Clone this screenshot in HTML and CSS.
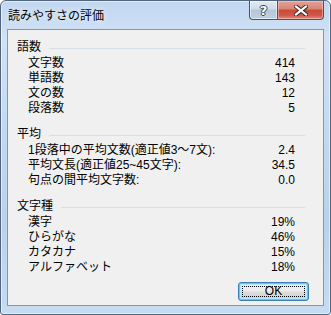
FILE: index.html
```html
<!DOCTYPE html>
<html lang="ja">
<head>
<meta charset="utf-8">
<title>読みやすさの評価</title>
<link rel="stylesheet" href="styles.css">
</head>
<body>
<div class="window">
  <div class="titlebar">
    <span class="title">読みやすさの評価</span>
    <div class="caption-buttons">
      <div class="cap-btn help"><span>?</span></div>
      <div class="cap-btn close">
        <svg width="14" height="11" viewBox="0 0 14 11">
          <path d="M2 1.5 L12 9.5 M12 1.5 L2 9.5" stroke="#3a2a2a" stroke-width="4.2" stroke-linecap="square" fill="none"/>
          <path d="M2 1.5 L12 9.5 M12 1.5 L2 9.5" stroke="#ffffff" stroke-width="2.2" stroke-linecap="square" fill="none"/>
        </svg>
      </div>
    </div>
  </div>
  <div class="client">
    <section class="group">
      <div class="group-head"><span>語数</span><span class="rule"></span></div>
      <div class="rows">
        <div class="row"><span>文字数</span><span class="val">414</span></div>
        <div class="row"><span>単語数</span><span class="val">143</span></div>
        <div class="row"><span>文の数</span><span class="val">12</span></div>
        <div class="row"><span>段落数</span><span class="val">5</span></div>
      </div>
    </section>
    <section class="group">
      <div class="group-head"><span>平均</span><span class="rule"></span></div>
      <div class="rows">
        <div class="row"><span>1段落中の平均文数(適正値3～7文):</span><span class="val">2.4</span></div>
        <div class="row"><span>平均文長(適正値25~45文字):</span><span class="val">34.5</span></div>
        <div class="row"><span>句点の間平均文字数:</span><span class="val">0.0</span></div>
      </div>
    </section>
    <section class="group">
      <div class="group-head"><span>文字種</span><span class="rule"></span></div>
      <div class="rows">
        <div class="row"><span>漢字</span><span class="val">19%</span></div>
        <div class="row"><span>ひらがな</span><span class="val">46%</span></div>
        <div class="row"><span>カタカナ</span><span class="val">15%</span></div>
        <div class="row"><span>アルファベット</span><span class="val">18%</span></div>
      </div>
    </section>
    <div class="actions">
      <button class="ok"><span class="focus">OK</span></button>
    </div>
  </div>
</div>
</body>
</html>
```
FILE: styles.css
```css
html, body {
  margin: 0;
  padding: 0;
  background: #ffffff;
}
body {
  width: 331px;
  height: 315px;
  overflow: hidden;
  font-family: "Liberation Sans", "Noto Sans CJK JP", sans-serif;
  font-size: 12px;
  color: #000;
}
.window {
  width: 331px;
  height: 315px;
  box-sizing: border-box;
  border: 1px solid #52657c;
  border-radius: 6px 6px 3px 3px;
  background: linear-gradient(to bottom, #c1d7f0 0%, #d1e2f5 12%, #c4d9f0 40%, #bad1eb 70%, #c7dbf1 100%);
  box-shadow: inset 0 0 0 1px rgba(255,255,255,0.55);
  display: flex;
  flex-direction: column;
}
.titlebar {
  height: 28px;
  display: flex;
  align-items: flex-start;
  flex: none;
}
.title {
  padding: 8px 0 0 7px;
  line-height: 14px;
  font-family: "Liberation Sans", "Noto Sans CJK JP", sans-serif;
  font-size: 12px;
  color: #000;
  text-shadow: 0 0 6px rgba(255,255,255,0.9);
}
.caption-buttons {
  margin-left: auto;
  margin-right: 6px;
  display: flex;
}
.cap-btn {
  height: 19px;
  box-sizing: border-box;
  border: 1px solid #44566d;
  border-top: none;
  display: flex;
  align-items: center;
  justify-content: center;
}
.help {
  width: 28px;
  border-right: none;
  border-radius: 0 0 0 4px;
  background: linear-gradient(to bottom, #e1e9f2 0%, #d0dbe7 45%, #b6c6d7 50%, #c0d0e1 100%);
  box-shadow: inset 0 0 0 1px rgba(255,255,255,0.5);
}
.help span {
  font-family: "DejaVu Sans", sans-serif;
  font-weight: bold;
  font-size: 13px;
  line-height: 13px;
  color: #fff;
  text-shadow: 1px 0 0 #3a4656, -1px 0 0 #3a4656, 0 1px 0 #3a4656, 0 -1px 0 #3a4656;
}
.close {
  width: 47px;
  border-radius: 0 0 4px 0;
  background: linear-gradient(to bottom, #e2a296 0%, #d98473 45%, #c74a36 50%, #d0584a 80%, #e08f7d 100%);
  box-shadow: inset 0 0 0 1px rgba(255,220,210,0.45);
}
.close svg {
  display: block;
}
.client {
  margin: 0 6px;
  height: 277px;
  box-sizing: border-box;
  border: 1px solid #8797aa;
  background: #f0f0f0;
  padding: 10px 18px 0 9px;
  flex: none;
}
.group + .group {
  margin-top: 11px;
}
.group-head {
  display: flex;
  align-items: center;
  line-height: 15px;
  height: 15px;
}
.rule {
  flex: 1;
  height: 1px;
  background: #d5dfe5;
  margin-left: 8px;
  margin-top: 1px;
}
.rows {
  margin-top: 1px;
}
.row {
  display: flex;
  justify-content: space-between;
  line-height: 15px;
  height: 15px;
  padding: 0 10px 0 11px;
  white-space: nowrap;
}
.val {
  text-align: right;
}
.actions {
  display: flex;
  justify-content: flex-end;
  margin-top: 7px;
  margin-right: -4px;
}
.ok {
  width: 71px;
  height: 19px;
  box-sizing: border-box;
  padding: 0;
  border: 1px solid #3c7fb1;
  border-radius: 3px;
  background: linear-gradient(to bottom, #f2f2f2 0%, #ebebeb 48%, #dddddd 52%, #cfcfcf 100%);
  box-shadow: inset 0 0 0 1px #5fc8f6, inset 0 0 0 2px #b6e6fb;
  font-family: "Liberation Sans", "Noto Sans CJK JP", sans-serif;
  font-size: 12px;
  color: #000;
  display: flex;
  align-items: stretch;
}
.focus {
  flex: 1;
  margin: 3px;
  border: 1px dotted #000;
  display: flex;
  align-items: center;
  justify-content: center;
  line-height: 9px;
}
```
